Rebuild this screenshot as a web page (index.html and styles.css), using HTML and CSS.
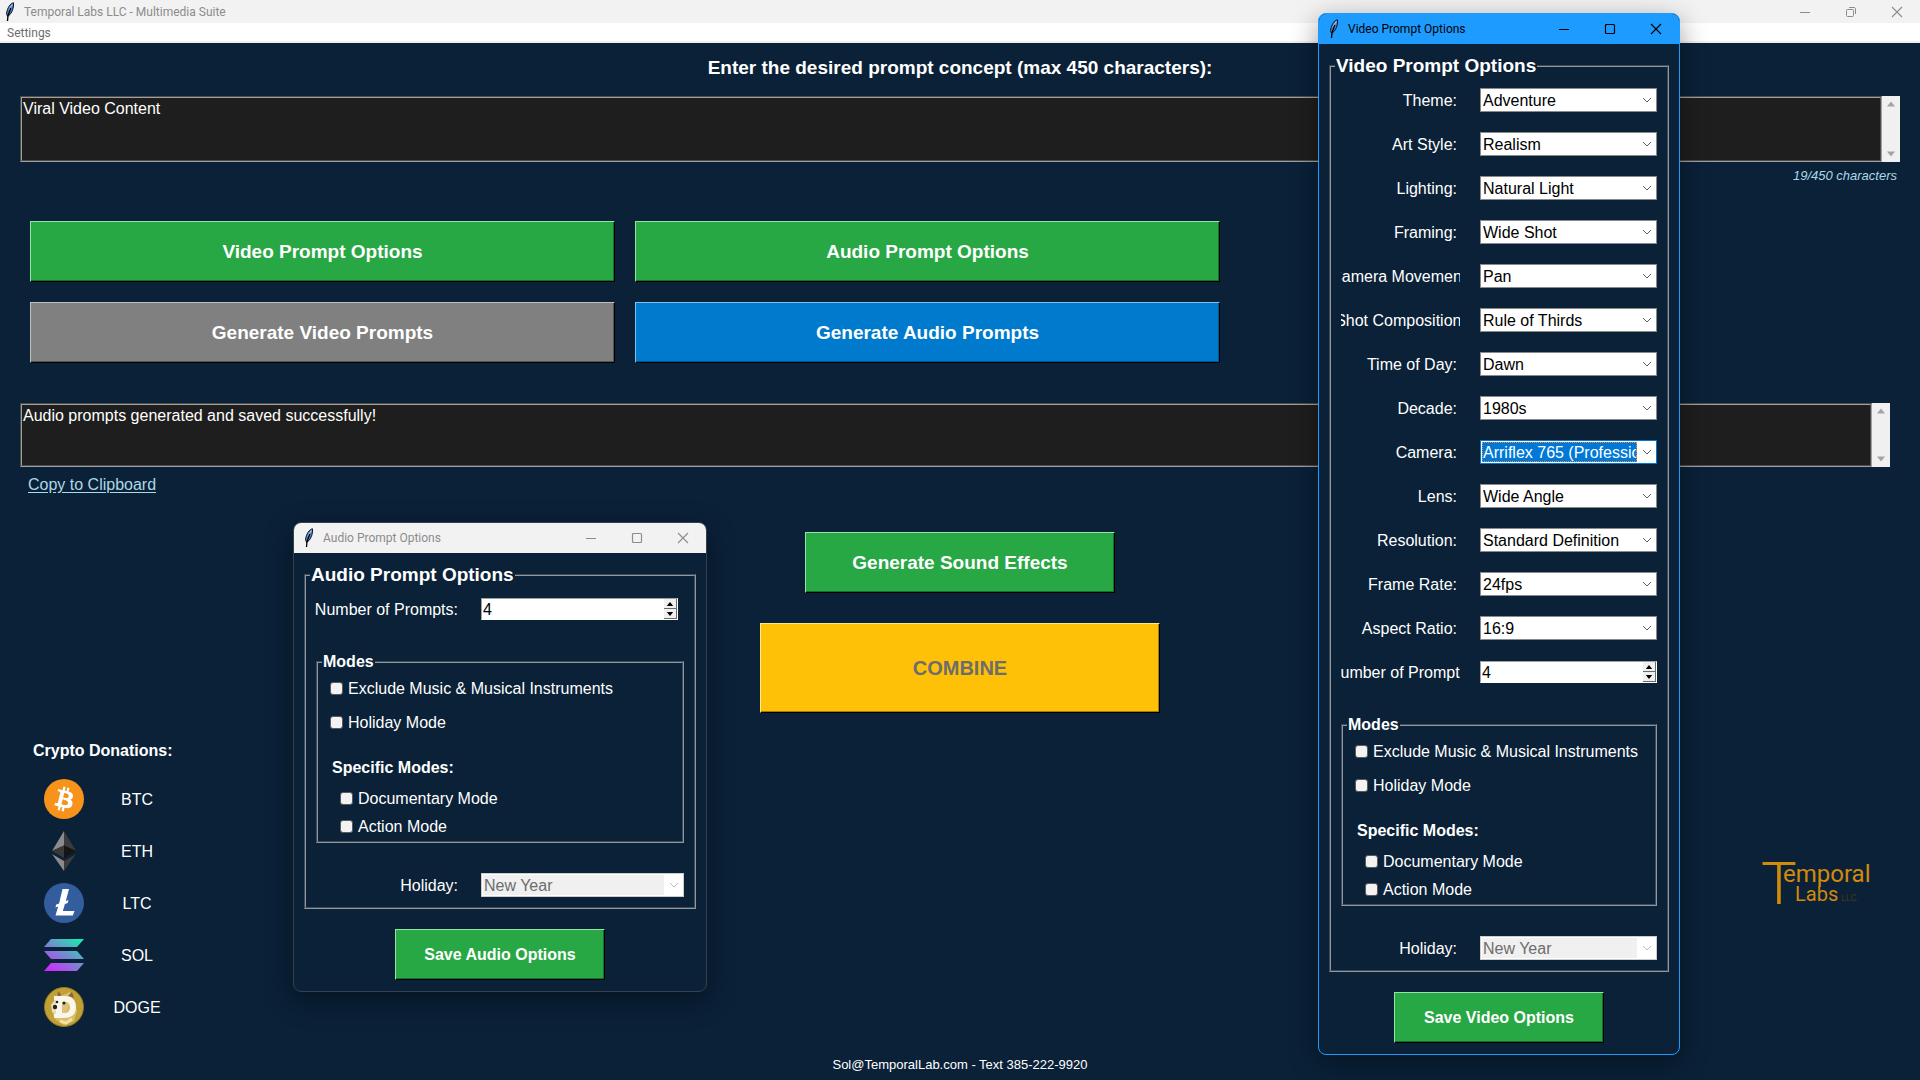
FILE: index.html
```html
<!DOCTYPE html>
<html lang="en">
<head>
<meta charset="utf-8">
<title>Temporal Labs LLC - Multimedia Suite</title>
<link rel="stylesheet" href="styles.css">
</head>
<body>
<svg class="defs" aria-hidden="true">
  <symbol id="feather" viewBox="0 0 10 20">
    <path d="M8.500 .8C5.500 1.200 2.200 6 1.500 11.500L2.600 14.500 5 12.500C7.500 9.500 9 5 8.500.8Z" fill="#4a86d8" stroke="#151515"/>
    <path d="M7.500 2.500C5.500 4.500 4.500 7 4.200 9" fill="none" stroke="#b9d6f6"/>
    <path d="M5.800 6L3 13.500 2.500 19" fill="none" stroke="#000" stroke-width="1.300"/>
  </symbol>
  <symbol id="minimize" viewBox="0 0 12 12"><path d="M1 6.500H11" fill="none" stroke="currentColor"/></symbol>
  <symbol id="maximize" viewBox="0 0 12 12"><rect x="1.500" y="1.500" width="9" height="9" rx="1" fill="none" stroke="currentColor" stroke-width="1.200"/></symbol>
  <symbol id="restore" viewBox="0 0 12 12"><rect x="1.500" y="3.500" width="7" height="7" rx="1" fill="none" stroke="currentColor"/><path d="M4 1.500H9C10 1.500 10.500 2 10.500 3V8" fill="none" stroke="currentColor"/></symbol>
  <symbol id="close" viewBox="0 0 12 12"><path d="M1 1L11 11M11 1L1 11" fill="none" stroke="currentColor" stroke-width="1.100"/></symbol>
  <symbol id="chevron" viewBox="0 0 10 6"><path d="M1 1L5 5 9 1" fill="none" stroke="currentColor"/></symbol>
  <symbol id="up" viewBox="0 0 8 5"><path d="M0 5L4 0 8 5Z" fill="currentColor"/></symbol>
  <symbol id="down" viewBox="0 0 8 5"><path d="M0 0L4 5 8 0Z" fill="currentColor"/></symbol>
</svg>

<div class="app">
  <header class="titlebar">
    <svg class="feather"><use href="#feather"/></svg>
    <span class="titlebar-text">Temporal Labs LLC - Multimedia Suite</span>
    <button class="caption" aria-label="Minimize"><svg><use href="#minimize"/></svg></button>
    <button class="caption" aria-label="Restore"><svg><use href="#restore"/></svg></button>
    <button class="caption" aria-label="Close"><svg><use href="#close"/></svg></button>
  </header>
  <nav class="menubar"><button class="menu">Settings</button></nav>

  <main class="main">
    <label class="heading" for="concept">Enter the desired prompt concept (max 450 characters):</label>
    <div class="textbox">
      <textarea id="concept">Viral Video Content</textarea>
      <div class="scroll"><svg><use href="#up"/></svg><svg><use href="#down"/></svg></div>
    </div>
    <p class="counter">19/450 characters</p>

    <div class="actions">
      <button class="btn btn-large">Video Prompt Options</button>
      <button class="btn btn-large">Audio Prompt Options</button>
      <button class="btn btn-large gray">Generate Video Prompts</button>
      <button class="btn btn-large blue">Generate Audio Prompts</button>
    </div>

    <div class="textbox status">
      <textarea aria-label="Status">Audio prompts generated and saved successfully!</textarea>
      <div class="scroll"><svg><use href="#up"/></svg><svg><use href="#down"/></svg></div>
    </div>
    <a class="copy" href="#">Copy to Clipboard</a>

    <div class="lower">
      <section class="crypto">
        <h2>Crypto Donations:</h2>
        <ul>
          <li>
            <svg viewBox="0 0 32 32"><circle cx="16" cy="16" r="16" fill="#f7931a"/><path fill="#fff" d="M23.189 14.020c.314-2.096-1.283-3.223-3.465-3.975l.708-2.840-1.728-.430-.690 2.765c-.454-.114-.920-.220-1.385-.326l.695-2.783L15.596 6l-.708 2.839c-.376-.086-.746-.170-1.104-.260l.002-.009-2.384-.595-.460 1.846s1.283.294 1.256.312c.700.175.826.638.805 1.006l-.806 3.235c.048.012.110.030.180.057l-.183-.045-1.130 4.532c-.086.212-.303.531-.793.410.018.025-1.256-.313-1.256-.313l-.858 1.978 2.250.561c.418.105.828.215 1.231.318l-.715 2.872 1.727.430.708-2.840c.472.127.930.245 1.378.357l-.706 2.828 1.728.430.715-2.866c2.948.558 5.164.333 6.097-2.333.752-2.146-.037-3.385-1.588-4.192 1.130-.260 1.980-1.003 2.207-2.538zm-3.950 5.538c-.533 2.147-4.148.986-5.320.695l.950-3.805c1.172.293 4.929.872 4.370 3.110zm.535-5.569c-.487 1.953-3.495.960-4.470.717l.860-3.450c.975.243 4.118.696 3.610 2.733z"/></svg>
            <span>BTC</span>
          </li>
          <li>
            <svg viewBox="0 0 40 40"><path d="M20 0L8 20 20 14.500Z" fill="#8b8b8b"/><path d="M20 0L32 20 20 14.500Z" fill="#3b3b3b"/><path d="M8 20L20 14.500V27Z" fill="#393939"/><path d="M32 20L20 14.500V27Z" fill="#151515"/><path d="M8 23L20 30V40Z" fill="#8b8b8b"/><path d="M32 23L20 30V40Z" fill="#3b3b3b"/></svg>
            <span>ETH</span>
          </li>
          <li>
            <svg viewBox="0 0 40 40"><circle cx="20" cy="20" r="20" fill="#345d9d"/><path d="M18.500 6H25L21.800 18 24.500 17 23.700 20 20.900 21 18.900 28H30.500L28.800 32.500H11.500L14.200 23.500 11.400 24.500 12.300 21.500 15.100 20.400Z" fill="#fff"/></svg>
            <span>LTC</span>
          </li>
          <li>
            <svg viewBox="0 0 40 40"><defs><linearGradient id="sol" gradientUnits="userSpaceOnUse" x1="34" y1="0" x2="8" y2="40"><stop stop-color="#0ff5a6"/><stop offset="1" stop-color="#dc1fff"/></linearGradient></defs><path d="M7 4H40L33 12H0ZM0 16H33L40 24H7ZM7 28H40L33 36H0Z" fill="url(#sol)"/></svg>
            <span>SOL</span>
          </li>
          <li>
            <svg viewBox="0 0 40 40"><circle cx="20" cy="20" r="19.500" fill="#bfa135" stroke="#957b22"/><path d="M12 10L14 4 19 8 26 5 29 12 33 24 30 34 20 38 12 33 9 28Z" fill="#d9bd6c"/><path d="M14 4L18 8 13 10ZM28 5L30 11 24 9Z" fill="#8b6632"/><path d="M7 18L12 11V28L8 25Z" fill="#e9ddc0"/><path fill-rule="evenodd" d="M10 9H21C28 9 32 13 32 20S28 31 20 31H10V27H12V13H10ZM18 15V26H21C24 26 26 24 26 20.500S24 15 21 15Z" fill="#faf6e9"/><path d="M18 15H21L25 17 22 26H18Z" fill="#dcc27b"/><circle cx="11" cy="20" r="2.200" fill="#252018"/><circle cx="13" cy="15" r="1.300" fill="#252018"/><circle cx="20" cy="16" r="1.500" fill="#252018"/><path d="M16 34L22 36 28 32" fill="none" stroke="#f2dfa2" stroke-width="3"/></svg>
            <span>DOGE</span>
          </li>
        </ul>
      </section>
      <div class="center">
        <button class="btn btn-large sound">Generate Sound Effects</button>
        <button class="btn btn-large combine" disabled>COMBINE</button>
      </div>
      <svg class="logo" viewBox="0 0 110 50" role="img" aria-label="Temporal Labs LLC">
        <text class="logo-t" x="0" y="46">T</text>
        <text class="logo-name" x="22" y="24">emporal</text>
        <text class="logo-labs" x="34" y="43">Labs</text>
        <text class="logo-llc" x="80" y="43">LLC.</text>
      </svg>
    </div>
    <footer class="footer">Sol@TemporalLab.com - Text 385-222-9920</footer>
  </main>

  <section class="window audio" aria-label="Audio Prompt Options">
    <header class="titlebar">
      <svg class="feather"><use href="#feather"/></svg>
      <span class="titlebar-text">Audio Prompt Options</span>
      <button class="caption" aria-label="Minimize"><svg><use href="#minimize"/></svg></button>
      <button class="caption" aria-label="Maximize"><svg><use href="#maximize"/></svg></button>
      <button class="caption" aria-label="Close"><svg><use href="#close"/></svg></button>
    </header>
    <form class="form">
      <fieldset class="options">
        <legend>Audio Prompt Options</legend>
        <div class="row"><label for="a-num">Number of Prompts:</label><div class="spin"><input id="a-num" type="text" value="4"><div class="steps"><button type="button" aria-label="Increase"><svg><use href="#up"/></svg></button><button type="button" aria-label="Decrease"><svg><use href="#down"/></svg></button></div></div></div>
        <fieldset class="modes">
          <legend>Modes</legend>
          <label class="check"><input type="checkbox">Exclude Music &amp; Musical Instruments</label>
          <label class="check"><input type="checkbox">Holiday Mode</label>
          <h3>Specific Modes:</h3>
          <label class="check sub"><input type="checkbox">Documentary Mode</label>
          <label class="check sub"><input type="checkbox">Action Mode</label>
        </fieldset>
        <div class="row"><label for="a-hol">Holiday:</label><div class="combo off"><select id="a-hol" disabled><option>New Year</option></select><svg><use href="#chevron"/></svg></div></div>
      </fieldset>
      <button type="button" class="btn save">Save Audio Options</button>
    </form>
  </section>

  <section class="window video" aria-label="Video Prompt Options">
    <header class="titlebar">
      <svg class="feather"><use href="#feather"/></svg>
      <span class="titlebar-text">Video Prompt Options</span>
      <button class="caption" aria-label="Minimize"><svg><use href="#minimize"/></svg></button>
      <button class="caption" aria-label="Maximize"><svg><use href="#maximize"/></svg></button>
      <button class="caption" aria-label="Close"><svg><use href="#close"/></svg></button>
    </header>
    <form class="form">
      <fieldset class="options">
        <legend>Video Prompt Options</legend>
        <div class="row"><label for="theme">Theme:</label><div class="combo"><select id="theme"><option>Adventure</option></select><svg><use href="#chevron"/></svg></div></div>
        <div class="row"><label for="art">Art Style:</label><div class="combo"><select id="art"><option>Realism</option></select><svg><use href="#chevron"/></svg></div></div>
        <div class="row"><label for="light">Lighting:</label><div class="combo"><select id="light"><option>Natural Light</option></select><svg><use href="#chevron"/></svg></div></div>
        <div class="row"><label for="frame">Framing:</label><div class="combo"><select id="frame"><option>Wide Shot</option></select><svg><use href="#chevron"/></svg></div></div>
        <div class="row"><label class="long" for="move">Camera Movement:</label><div class="combo"><select id="move"><option>Pan</option></select><svg><use href="#chevron"/></svg></div></div>
        <div class="row"><label class="long" for="shot">Shot Composition:</label><div class="combo"><select id="shot"><option>Rule of Thirds</option></select><svg><use href="#chevron"/></svg></div></div>
        <div class="row"><label for="time">Time of Day:</label><div class="combo"><select id="time"><option>Dawn</option></select><svg><use href="#chevron"/></svg></div></div>
        <div class="row"><label for="decade">Decade:</label><div class="combo"><select id="decade"><option>1980s</option></select><svg><use href="#chevron"/></svg></div></div>
        <div class="row"><label for="camera">Camera:</label><div class="combo active"><select id="camera"><option>Arriflex 765 (Professional)</option></select><svg><use href="#chevron"/></svg></div></div>
        <div class="row"><label for="lens">Lens:</label><div class="combo"><select id="lens"><option>Wide Angle</option></select><svg><use href="#chevron"/></svg></div></div>
        <div class="row"><label for="res">Resolution:</label><div class="combo"><select id="res"><option>Standard Definition</option></select><svg><use href="#chevron"/></svg></div></div>
        <div class="row"><label for="rate">Frame Rate:</label><div class="combo"><select id="rate"><option>24fps</option></select><svg><use href="#chevron"/></svg></div></div>
        <div class="row"><label for="ratio">Aspect Ratio:</label><div class="combo"><select id="ratio"><option>16:9</option></select><svg><use href="#chevron"/></svg></div></div>
        <div class="row"><label class="long" for="v-num">Number of Prompts:</label><div class="spin"><input id="v-num" type="text" value="4"><div class="steps"><button type="button" aria-label="Increase"><svg><use href="#up"/></svg></button><button type="button" aria-label="Decrease"><svg><use href="#down"/></svg></button></div></div></div>
        <fieldset class="modes">
          <legend>Modes</legend>
          <label class="check"><input type="checkbox">Exclude Music &amp; Musical Instruments</label>
          <label class="check"><input type="checkbox">Holiday Mode</label>
          <h3>Specific Modes:</h3>
          <label class="check sub"><input type="checkbox">Documentary Mode</label>
          <label class="check sub"><input type="checkbox">Action Mode</label>
        </fieldset>
        <div class="row"><label for="v-hol">Holiday:</label><div class="combo off"><select id="v-hol" disabled><option>New Year</option></select><svg><use href="#chevron"/></svg></div></div>
      </fieldset>
      <button type="button" class="btn save">Save Video Options</button>
    </form>
  </section>
</div>
</body>
</html>
```
FILE: styles.css
```css
* { box-sizing: border-box; }

body {
  margin: 0;
  background: #0a2138;
  color: #fff;
  font: 16px/18px "Liberation Sans", Arial, sans-serif;
}

button, input, select, textarea { font: inherit; color: inherit; }
h2, h3, p, ul { margin: 0; padding: 0; }
h2, h3 { font-size: 16px; line-height: 18px; }

.defs { display: none; }

.app {
  position: relative;
  display: flex;
  flex-direction: column;
  min-height: 100vh;
  overflow: hidden;
}

/* Title bars */
.titlebar {
  display: flex;
  align-items: center;
  height: 23px;
  padding-left: 5px;
  background: #f2f2f2;
  color: #8c8c8c;
  font: 12px/16px Roboto, "Open Sans", sans-serif;
}
.feather { width: 10px; height: 20px; }
.titlebar-text { flex: 1; margin-left: 9px; }
.caption {
  display: flex;
  align-items: center;
  justify-content: center;
  width: 46px;
  height: 20px;
  padding: 0;
  border: 0;
  background: none;
}
.caption svg { width: 12px; height: 12px; }

.menubar {
  height: 20px;
  border-bottom: 2px solid #f0f0f0;
  background: #fff;
}
.menu {
  display: block;
  padding: 1px 7px 0;
  border: 0;
  background: none;
  color: #6d6d6d;
  font: 12px/18px Roboto, "Open Sans", sans-serif;
}

/* Main form */
.main {
  flex: 1;
  display: flex;
  flex-direction: column;
  padding: 14px 20px 7px;
}
.heading {
  margin-bottom: 17px;
  font-size: 19px;
  font-weight: bold;
  line-height: 22px;
  text-align: center;
}
.textbox { display: flex; height: 66px; }
.textbox textarea {
  flex: 1;
  padding: 2px 1px;
  border: 2px groove #a0a0a0;
  background: #1e1e1e;
  resize: none;
  outline: 0;
  overflow: hidden;
}
.scroll {
  display: flex;
  flex-direction: column;
  align-items: center;
  justify-content: space-between;
  width: 18px;
  padding: 5px 0;
  background: #f0f0f0;
  color: #a3a3a3;
}
.scroll svg { width: 8px; height: 6px; }
.counter {
  padding: 5px 3px 0 0;
  color: #add8e6;
  font-size: 13px;
  font-style: italic;
  text-align: right;
}
.actions {
  display: grid;
  grid-template-columns: repeat(3, 1fr);
  margin: 26px 65px 30px 0;
}
.actions .btn { margin: 10px; }
.actions .btn:nth-child(2n+1) { grid-column: 1; }
.textbox.status { height: 64px; margin-right: 10px; }
.copy {
  align-self: flex-start;
  margin: 9px 8px 8px;
  color: #add8e6;
  text-underline-offset: 2px;
}

.btn {
  height: 51px;
  padding: 0;
  border: 1px solid;
  border-color: #93e4a6 #000 #000 #93e4a6;
  background: #28a745;
  box-shadow: inset -1px -1px #14702a;
  font-weight: bold;
}
.btn-large { height: 61px; font-size: 19px; }
.gray { border-color: #c0c0c0 #000 #000 #c0c0c0; background: #808080; box-shadow: inset -1px -1px #555; }
.blue { border-color: #7fc0f5 #000 #000 #7fc0f5; background: #007acc; box-shadow: inset -1px -1px #00558c; }

.lower {
  flex: 1;
  display: grid;
  grid-template-columns: 1fr 400px 1fr;
}
.center {
  display: flex;
  flex-direction: column;
  align-items: center;
  gap: 30px;
  padding-top: 30px;
}
.sound { width: 310px; }
.combine {
  width: 100%;
  height: 90px;
  border-color: #ffe78f #000 #000 #ffe78f;
  background: #ffc107;
  box-shadow: inset -1px -1px #a67c00;
  color: #6d6d6d;
  font-size: 20px;
}

.crypto { align-self: end; padding: 0 0 24px 13px; }
.crypto ul { margin-top: 13px; list-style: none; }
.crypto li { display: flex; align-items: center; height: 52px; padding-left: 11px; }
.crypto li svg { width: 40px; height: 40px; }
.crypto li span { width: 106px; padding-top: 2px; text-align: center; }

.logo {
  align-self: end;
  justify-self: end;
  width: 110px;
  height: 50px;
  margin: 0 29px 149px 0;
  fill: #d18a0a;
  font-family: Roboto, sans-serif;
  overflow: visible;
}
.logo-t { font-size: 60px; font-weight: 300; }
.logo-name { font-size: 24px; }
.logo-labs { font-size: 20px; }
.logo-llc { font-size: 9px; fill: #49370f; }

.footer { font-size: 13px; line-height: 16px; text-align: center; }

/* Floating dialogs */
.window {
  position: absolute;
  border: 1px solid #34414f;
  border-radius: 8px;
  background: #0a2138;
  box-shadow: 0 8px 28px rgba(0, 0, 0, .4);
  overflow: hidden;
}
.audio { top: 522px; left: 293px; width: 414px; --field: 203px; --spin: 197px; }
.video { top: 13px; right: 240px; width: 362px; border-color: #1e9bff; --field: 177px; --spin: 177px; }
.window .titlebar { height: 30px; padding-left: 10px; }
.video .titlebar { background: #1e9bff; color: #000; }

.form {
  display: flex;
  flex-direction: column;
  padding: 11px 10px;
}
fieldset {
  min-width: 0;
  margin: 0;
  border: 2px groove #8b98a5;
}
.options { padding: 1px 10px 0; }
legend {
  margin-left: -6px;
  padding: 0 1px;
  font-size: 19px;
  font-weight: bold;
  line-height: 22px;
}
.row {
  display: flex;
  align-items: center;
  gap: 20px;
  height: 44px;
}
.row label {
  flex: 1;
  display: flex;
  justify-content: flex-end;
  min-width: 0;
  padding: 2px 3px 0 0;
  white-space: nowrap;
}
.row .long { justify-content: center; padding-right: 0; overflow: hidden; }

.combo {
  display: flex;
  align-items: center;
  width: var(--field);
  height: 24px;
  padding: 1px;
  border: 1px solid #8a8a8a;
  background: #fff;
  color: #000;
}
.combo select {
  flex: 1;
  min-width: 0;
  height: 20px;
  padding: 1px 0 0 1px;
  border: 0;
  border-radius: 0;
  background: #fff;
  appearance: none;
  opacity: 1;
  outline: 0;
  text-overflow: clip;
}
.combo svg { width: 10px; height: 6px; margin: 0 3px 0 5px; color: #606060; }
.combo.active { border-color: #0078d7; }
.combo.active select { background: #0078d7; color: #fff; outline: 1px dotted #ff8728; outline-offset: -1px; }
.combo.off { border-color: #ccc; }
.combo.off select { background: #f0f0f0; color: #6d6d6d; }
.combo.off svg { color: #bbb; }

.spin {
  display: flex;
  width: var(--spin);
  height: 22px;
  margin-right: calc(var(--field) - var(--spin));
  border: 1px solid;
  border-color: #a0a0a0 #fff #fff #a0a0a0;
  background: #fff;
  color: #000;
}
.spin input {
  flex: 1;
  min-width: 0;
  padding: 1px 1px 0;
  border: 0;
  background: none;
  outline: 0;
}
.steps { display: flex; flex-direction: column; width: 13px; }
.steps button {
  flex: 1;
  display: flex;
  align-items: center;
  justify-content: center;
  min-height: 0;
  padding: 0;
  border: 0;
  border-right: 1px solid #696969;
  border-bottom: 1px solid #696969;
  background: #f0f0f0;
}
.steps svg { width: 8px; height: 4px; }

.modes { margin-top: 22px; padding: 1px 0 0 12px; }
.modes legend { margin-left: -8px; font-size: 16px; line-height: 18px; }
.modes + .row { margin-top: 20px; }
.modes h3 { margin: 11px 0 0 2px; line-height: 34px; }
.check { display: flex; align-items: center; gap: 5px; height: 34px; white-space: nowrap; }
.check.sub { height: 28px; padding-left: 10px; }
.check input {
  width: 13px;
  height: 13px;
  margin: 0 0 2px;
  border: 1px solid #5a5a5a;
  border-radius: 3px;
  background: #f3f3f3;
  appearance: none;
}
.save { align-self: center; width: 210px; margin-top: 20px; }
```
